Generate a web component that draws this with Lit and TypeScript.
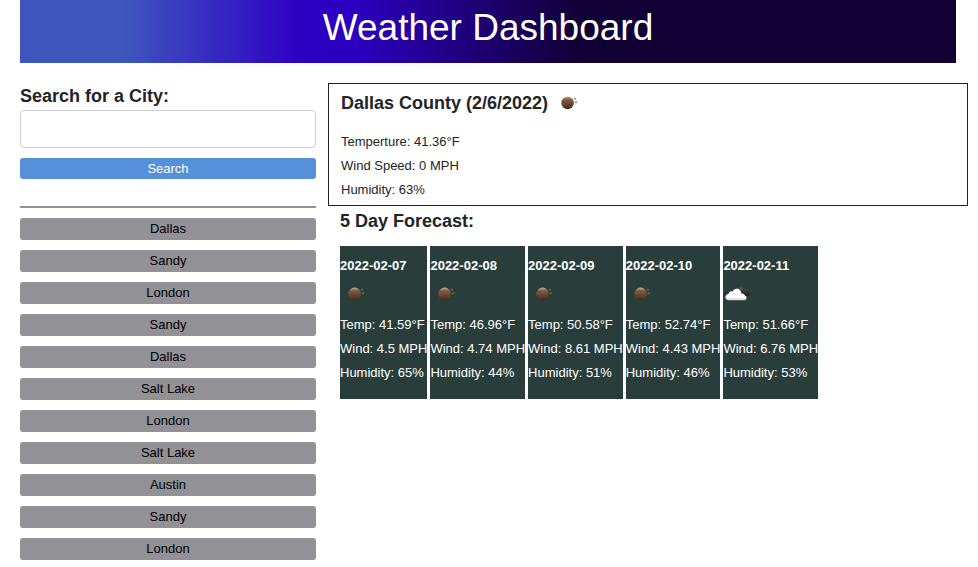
import { LitElement, html, svg, css } from "lit";
import { customElement, property } from "lit/decorators.js";

type Sky = "clear-night" | "cloudy";

interface Day {
  date: string;
  sky: Sky;
  temp: string;
  wind: string;
  humidity: string;
}

const CITIES = [
  "Dallas", "Sandy", "London", "Sandy", "Dallas", "Salt Lake",
  "London", "Salt Lake", "Austin", "Sandy", "London",
];

const DAYS: Day[] = [
  { date: "2022-02-07", sky: "clear-night", temp: "41.59", wind: "4.5", humidity: "65" },
  { date: "2022-02-08", sky: "clear-night", temp: "46.96", wind: "4.74", humidity: "44" },
  { date: "2022-02-09", sky: "clear-night", temp: "50.58", wind: "8.61", humidity: "51" },
  { date: "2022-02-10", sky: "clear-night", temp: "52.74", wind: "4.43", humidity: "46" },
  { date: "2022-02-11", sky: "cloudy", temp: "51.66", wind: "6.76", humidity: "53" },
];

@customElement("sky-icon")
export class SkyIcon extends LitElement {
  @property() sky: Sky = "clear-night";

  static styles = css`
    :host { display: block; width: 30px; height: 30px; }
    .art { display: block; width: 100%; height: 100%; }
  `;

  private moon() {
    return svg`
      <defs>
        <linearGradient id="moon" x1="0" y1="0" x2="0" y2="1">
          <stop offset="0" stop-color="#c9ad98" />
          <stop offset="0.25" stop-color="#805a41" />
          <stop offset="0.6" stop-color="#66452f" />
          <stop offset="1" stop-color="#3e2a1f" />
        </linearGradient>
      </defs>
      <circle cx="14.6" cy="14.9" r="6.3" fill="url(#moon)" />
      <circle cx="22" cy="10.7" r="1.2" fill="#8a6a54" fill-opacity="0.6" />
      <circle cx="23" cy="14.3" r="1.3" fill="#8a6a54" fill-opacity="0.6" />
    `;
  }

  private clouds() {
    return svg`
      <defs>
        <linearGradient id="dark" x1="0" y1="0" x2="0" y2="1">
          <stop offset="0" stop-color="#5c5c5e" />
          <stop offset="0.5" stop-color="#303032" />
          <stop offset="1" stop-color="#222224" />
        </linearGradient>
        <linearGradient id="light" x1="0" y1="0" x2="0" y2="1">
          <stop offset="0.7" stop-color="#ffffff" />
          <stop offset="1" stop-color="#d2d4d4" />
        </linearGradient>
      </defs>
      <path fill="url(#dark)" d="M14.4 11.4C14.8 8.8 18.6 7.2 20.8 9.6L21.4 10.4C23.2 9.6 24.8 10.6 25 12.2C27.2 12.2 28.4 14 27.4 15.8C27 16.7 26.2 17 25.2 17H19Z" />
      <path fill="url(#light)" d="M5.8 21.2C3 21.2 2 19.4 2.5 17.6C2.9 16.1 4.1 15.2 5.6 15.1C5.7 12.9 7.7 11.8 9.4 12.5C10.6 9.6 14.8 8.6 17 11.2C18 12.2 18.4 13.4 18.3 14.6C20.2 14.2 21.6 15.2 21.8 16.7C24.2 17 24.3 21.2 21.3 21.2Z" />
    `;
  }

  render() {
    return html`<svg class="art" viewBox="0 0 30 30" role="img" aria-label=${this.sky}>
      ${this.sky === "cloudy" ? this.clouds() : this.moon()}
    </svg>`;
  }
}

@customElement("app-root")
export class AppRoot extends LitElement {
  static styles = css`
    :host {
      display: block;
      background: #fff;
      color: #212529;
      font: 13px/24px "Liberation Sans", Arial, sans-serif;
    }
    h1, h2, h3, p { margin: 0; }
    .banner {
      margin: 0 22px 0 20px;
      padding: 5px 0 12px;
      background: linear-gradient(90deg, #3f56be 11%, #2d00c4 30%, #2c00c0 36%, #110034 60%);
      color: #fff;
      text-align: center;
    }
    .title { font-size: 37px; line-height: 46px; font-weight: 400; }
    .columns {
      display: grid;
      grid-template-columns: 296fr 640fr;
      column-gap: 12px;
      align-items: start;
      padding: 20px 10px 0 20px;
    }
    .side { display: flex; flex-direction: column; gap: 10px; }
    .search { display: flex; flex-direction: column; }
    .heading { font-size: 18px; line-height: 22px; font-weight: 700; }
    .label { margin: 2px 0 3px; }
    .field {
      box-sizing: border-box;
      width: 100%;
      height: 38px;
      margin: 0 0 10px;
      padding: 6px 12px;
      border: 1px solid #c8ccd8;
      border-radius: 4px;
      background: #fff;
      font: inherit;
      font-size: 16px;
    }
    .button {
      width: 100%;
      padding: 0;
      border: 0;
      border-radius: 3px;
      background: #929196;
      color: #000;
      font: inherit;
      line-height: 22px;
      cursor: pointer;
    }
    .go { background: #568fda; color: #fff; line-height: 21px; }
    .rule { width: 100%; height: 2px; margin: 17px 0 0; border: 0; background: #929196; }
    .current { padding: 4px 12px 3px; border: 1px solid #212121; }
    .place { display: flex; align-items: center; gap: 5px; margin-bottom: 12px; }
    .forecast { padding: 4px 12px 0; }
    .days { display: flex; gap: 3px; margin-top: 14px; }
    .day { padding: 8px 0 14px; background: #293e3b; color: #fff; white-space: nowrap; }
    .date { font-size: 13px; line-height: 24px; font-weight: 700; }
    .day-sky { margin: 1px 0 4px; }
  `;

  render() {
    return html`
      <header class="banner"><h1 class="title">Weather Dashboard</h1></header>
      <main class="columns">
        <aside class="side">
          <form class="search" @submit=${(e: Event) => e.preventDefault()}>
            <label class="heading label" for="city">Search for a City:</label>
            <input class="field" id="city" type="text" />
            <button class="button go" type="submit">Search</button>
          </form>
          <hr class="rule" />
          ${CITIES.map((city) => html`<button class="button" type="button">${city}</button>`)}
        </aside>
        <div>
          <section class="current">
            <div class="place">
              <h2 class="heading">Dallas County (2/6/2022)</h2>
              <sky-icon sky="clear-night"></sky-icon>
            </div>
            <p>Temperture: 41.36°F</p>
            <p>Wind Speed: 0 MPH</p>
            <p>Humidity: 63%</p>
          </section>
          <section class="forecast">
            <h2 class="heading">5 Day Forecast:</h2>
            <div class="days">
              ${DAYS.map((d) => html`
                <article class="day">
                  <h3 class="date">${d.date}</h3>
                  <sky-icon class="day-sky" sky=${d.sky}></sky-icon>
                  <p>Temp: ${d.temp}°F</p>
                  <p>Wind: ${d.wind} MPH</p>
                  <p>Humidity: ${d.humidity}%</p>
                </article>
              `)}
            </div>
          </section>
        </div>
      </main>
    `;
  }
}
